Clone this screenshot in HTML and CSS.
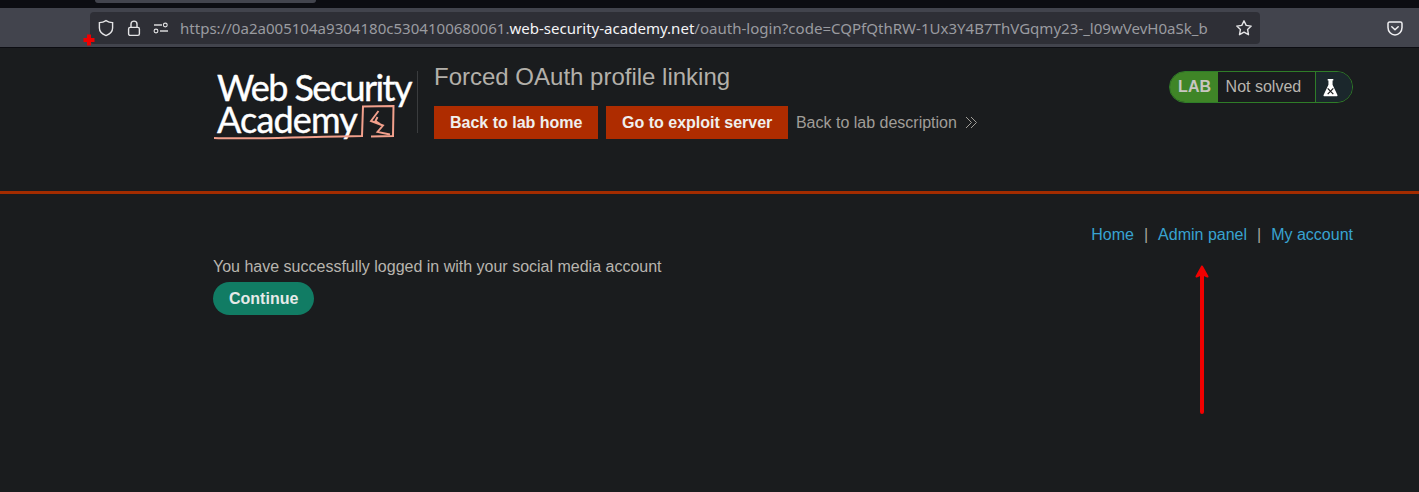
FILE: index.html
```html
<!DOCTYPE html>
<html>
<head>
    <title>Forced OAuth profile linking</title>
    <link rel="stylesheet" href="styles.css">
</head>
<body>
    <div class="tab-strip">
        <div class="tab-edge"></div>
    </div>
    <div class="toolbar">
        <div class="url-bar">
            <svg class="url-icon" width="18" height="18" viewBox="0 0 18 18" fill="none" stroke="#e4e4e6" stroke-width="1.4">
                <path d="M9 1.6 C11 3 13.5 3.6 15.6 3.6 V9 C15.6 12.4 12.6 15.2 9 16.6 C5.4 15.2 2.4 12.4 2.4 9 V3.6 C4.5 3.6 7 3 9 1.6 Z"/>
            </svg>
            <svg class="url-icon" width="14" height="18" viewBox="0 0 14 18" fill="none" stroke="#e4e4e6" stroke-width="1.4">
                <rect x="1.6" y="8.4" width="10.8" height="8" rx="1.6"/>
                <path d="M4 8.4 V5 C4 1.2 10 1.2 10 5 V8.4"/>
            </svg>
            <svg class="url-icon url-icon-last" width="16" height="12" viewBox="0 0 16 12" fill="none" stroke="#e4e4e6" stroke-width="1.1">
                <circle cx="12.3" cy="3" r="1.9"/>
                <path d="M1 3 H9" stroke-width="1.4"/>
                <circle cx="3" cy="9" r="1.9"/>
                <path d="M7 9 H15" stroke-width="1.4"/>
            </svg>
            <div class="url-text">https://0a2a005104a9304180c5304100680061.<span class="url-host">web-security-academy.net</span>/oauth-login?code=CQPfQthRW-1Ux3Y4B7ThVGqmy23-_l09wVevH0aSk_b</div>
            <svg class="url-star" width="18" height="18" viewBox="0 0 18 18" fill="none" stroke="#e4e4e6" stroke-width="1.4" stroke-linejoin="round">
                <path d="M9 1.8 L11.2 6.4 L16.2 7.1 L12.6 10.6 L13.5 15.7 L9 13.2 L4.5 15.7 L5.4 10.6 L1.8 7.1 L6.8 6.4 Z"/>
            </svg>
        </div>
        <svg class="pocket" width="16" height="15" viewBox="0 0 16 15" fill="none" stroke="#f0f0f2" stroke-width="1.5">
            <path d="M2.6 1 H13.4 C14.4 1 15 1.6 15 2.6 V6.5 C15 10.6 11.8 14 8 14 C4.2 14 1 10.6 1 6.5 V2.6 C1 1.6 1.6 1 2.6 1 Z"/>
            <path d="M4.8 5.8 L8 8.8 L11.2 5.8" stroke-linecap="round" stroke-linejoin="round"/>
        </svg>
    </div>

    <div class="lab-header">
        <div class="container lab-header-inner">
            <div class="logo">
                <div class="logo-text">Web Security</div>
                <div class="logo-text logo-text-second">Academy</div>
                <svg class="logo-mark" width="204" height="72" viewBox="0 0 204 72" fill="none" stroke="#f2a08c" stroke-width="2">
                    <path d="M1 67 C40 68.5 100 65.5 149 65 L150 35.5 L180.5 35 L180 65 L158 65.5"/>
                    <path d="M165.5 40 L158 50 L170 54.5 L164.5 61 L177 63.5 M164.5 46 L162.5 50 L167 53" stroke-width="1.9"/>
                </svg>
            </div>
            <div class="lab-title-block">
                <h2 class="lab-title">Forced OAuth profile linking</h2>
                <div class="lab-links">
                    <a class="lab-btn">Back to lab home</a>
                    <a class="lab-btn">Go to exploit server</a>
                    <a class="lab-back">Back to lab description
                        <svg width="13" height="13" viewBox="0 0 13 13" fill="none" stroke="#a09d98" stroke-width="1">
                            <path d="M1 1 L6.5 6.5 L1 12"/>
                            <path d="M6 1 L11.5 6.5 L6 12"/>
                        </svg>
                    </a>
                </div>
            </div>
            <div class="lab-status">
                <span class="status-tag">LAB</span>
                <span class="status-text">Not solved</span>
                <span class="status-icon">
                    <svg width="15" height="19" viewBox="0 0 16 20">
                        <path fill="#fff" d="M5 1 H11 V2.4 H10.2 V7 L15.4 18 C15.7 18.8 15.2 19.4 14.4 19.4 H1.6 C0.8 19.4 0.3 18.8 0.6 18 L5.8 7 V2.4 H5 Z"/>
                        <path stroke="#1a1c1e" stroke-width="1.3" d="M5 11 L11 17 M11 11 L5 17"/>
                    </svg>
                </span>
            </div>
        </div>
    </div>

    <div class="container main">
        <nav class="top-links">
            <a>Home</a><span class="sep">|</span><a>Admin panel</a><span class="sep">|</span><a>My account</a>
        </nav>
        <p class="message">You have successfully logged in with your social media account</p>
        <a class="continue-btn">Continue</a>
    </div>

    <!-- annotations drawn on top of the screenshot -->
    <svg class="mark-plus" width="14" height="14" viewBox="0 0 14 14">
        <path fill="#f00000" d="M5 1.5 H9 V5 H12.5 V9 H9 V12.5 H5 V9 H1.5 V5 H5 Z"/>
    </svg>
    <svg class="mark-arrow" width="18" height="152" viewBox="0 0 18 152" fill="none" stroke="#f00000" stroke-linecap="round" stroke-linejoin="round">
        <path d="M9 8 V148" stroke-width="4"/>
        <path fill="#f00000" stroke-width="2" d="M9 2.5 L3.5 12.5 L9 10 L14.5 12.5 Z"/>
    </svg>
</body>
</html>
```

FILE: styles.css
```css
html, body {
    margin: 0;
    padding: 0;
}
body {
    position: relative;
    height: 492px;
    overflow: hidden;
    background-color: #1a1c1e;
    font-family: "Liberation Sans", Arial, sans-serif;
    font-size: 16px;
    color: #b8b5af;
}
a {
    text-decoration: none;
}

/* browser chrome */
.tab-strip {
    height: 8px;
    background-color: #0c0d12;
}
.tab-edge {
    width: 221px;
    height: 3px;
    margin-left: 95px;
    background-color: #42444d;
    border-radius: 0 0 4px 4px;
}
.toolbar {
    display: flex;
    align-items: flex-start;
    height: 40px;
    box-sizing: border-box;
    padding: 4px 16px 0 90px;
    background-color: #42444d;
    border-bottom: 1px solid #0c0d12;
}
.url-bar {
    display: flex;
    align-items: center;
    width: 1170px;
    height: 32px;
    box-sizing: border-box;
    padding: 0 7px;
    background-color: #2e2f36;
    border-radius: 4px;
}
.url-icon {
    flex: none;
    margin-right: 12px;
}
.url-icon-last {
    margin-right: 11px;
}
.url-text {
    flex: 1;
    font-family: "Noto Sans", sans-serif;
    font-size: 15.05px;
    white-space: nowrap;
    overflow: hidden;
    color: #9a9ba0;
}
.url-host {
    color: #f4f4f6;
}
.url-star {
    flex: none;
}
.pocket {
    margin: 9px 0 0 auto;
}

/* lab header */
.container {
    width: 1140px;
    margin-left: 213px;
}
.lab-header {
    height: 143px;
    border-bottom: 3px solid #a32c00;
}
.lab-header-inner {
    display: flex;
    align-items: flex-start;
}
.logo {
    position: relative;
    width: 204px;
    height: 62px;
    margin-top: 23px;
    border-right: 1px solid #3a3c3e;
    flex: none;
}
.logo-text {
    padding-left: 4px;
    font-family: "Lato", sans-serif;
    font-size: 36px;
    line-height: 32px;
    letter-spacing: -1.55px;
    -webkit-text-stroke: 0.4px #fff;
    color: #fff;
    white-space: nowrap;
}
.logo-text-second {
    letter-spacing: -0.85px;
}
.logo-mark {
    position: absolute;
    left: 0;
    top: 0;
}
.lab-title-block {
    margin-left: 16px;
    flex: 1;
}
.lab-title {
    margin: 14px 0 0;
    font-size: 24px;
    line-height: 30px;
    font-weight: normal;
    color: #b3b0aa;
}
.lab-links {
    display: flex;
    align-items: center;
    margin-top: 14px;
}
.lab-btn {
    height: 33px;
    line-height: 33px;
    padding: 0 16px;
    margin-right: 7.6px;
    background-color: #ae2c00;
    font-weight: bold;
    color: #f0efed;
}
.lab-back {
    display: flex;
    align-items: center;
    gap: 8px;
    color: #a09d98;
}
.lab-status {
    display: flex;
    align-items: stretch;
    height: 32px;
    margin-top: 23px;
    box-sizing: border-box;
    border: 1px solid #2f7d28;
    border-radius: 16px;
    overflow: hidden;
    flex: none;
}
.status-tag {
    display: flex;
    align-items: center;
    padding: 0 7px 0 8px;
    background-color: #3f8527;
    font-weight: bold;
    color: #c8c6c0;
}
.status-text {
    display: flex;
    align-items: center;
    width: 98px;
    box-sizing: border-box;
    padding-left: 7.6px;
    border-right: 1px solid #2f7d28;
}
.status-icon {
    display: flex;
    align-items: center;
    width: 36px;
    padding-left: 7px;
    box-sizing: border-box;
    background-color: #1b272c;
}

/* page content */
.top-links {
    display: flex;
    justify-content: flex-end;
    margin-top: 31px;
    line-height: 20px;
}
.top-links a {
    color: #38a3d1;
}
.sep {
    margin: 0 10px;
    color: #a8a5a0;
}
.message {
    margin: 12px 0 0;
    line-height: 20px;
}
.continue-btn {
    display: inline-block;
    margin-top: 5px;
    height: 33px;
    line-height: 33px;
    padding: 0 16px;
    border-radius: 17px;
    background-color: #117c64;
    font-weight: bold;
    color: #e6eae8;
}

/* annotations */
.mark-plus {
    position: absolute;
    left: 82px;
    top: 33px;
}
.mark-arrow {
    position: absolute;
    left: 1193px;
    top: 264px;
}
```
